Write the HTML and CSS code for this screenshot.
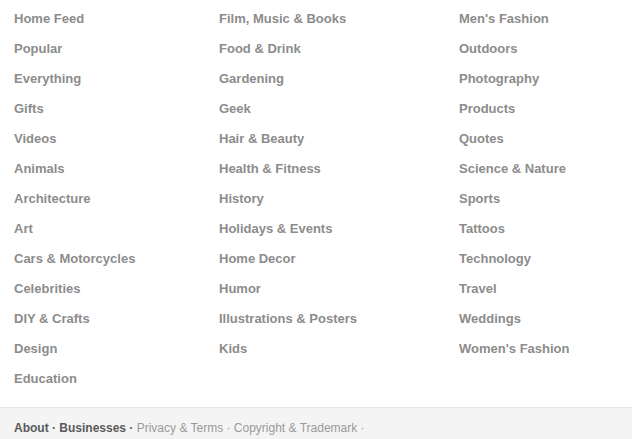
FILE: index.html
```html
<!DOCTYPE html>
<html>
<head>
<meta charset="utf-8">
<link rel="stylesheet" href="styles.css">
</head>
<body>
<div class="cats">
  <ul class="col col1">
    <li>Home Feed</li>
    <li>Popular</li>
    <li>Everything</li>
    <li>Gifts</li>
    <li>Videos</li>
    <li>Animals</li>
    <li>Architecture</li>
    <li>Art</li>
    <li>Cars &amp; Motorcycles</li>
    <li>Celebrities</li>
    <li>DIY &amp; Crafts</li>
    <li>Design</li>
    <li>Education</li>
  </ul>
  <ul class="col col2">
    <li>Film, Music &amp; Books</li>
    <li>Food &amp; Drink</li>
    <li>Gardening</li>
    <li>Geek</li>
    <li>Hair &amp; Beauty</li>
    <li>Health &amp; Fitness</li>
    <li>History</li>
    <li>Holidays &amp; Events</li>
    <li>Home Decor</li>
    <li>Humor</li>
    <li>Illustrations &amp; Posters</li>
    <li>Kids</li>
  </ul>
  <ul class="col col3">
    <li>Men's Fashion</li>
    <li>Outdoors</li>
    <li>Photography</li>
    <li>Products</li>
    <li>Quotes</li>
    <li>Science &amp; Nature</li>
    <li>Sports</li>
    <li>Tattoos</li>
    <li>Technology</li>
    <li>Travel</li>
    <li>Weddings</li>
    <li>Women's Fashion</li>
  </ul>
</div>
<div class="footer">
  <span class="strong">About</span><span class="strong sep"> · </span><span class="strong">Businesses</span><span class="strong sep"> · </span><span class="light">Privacy &amp; Terms</span><span class="light sep"> · </span><span class="light">Copyright &amp; Trademark</span><span class="light sep"> · </span>
</div>
</body>
</html>
```
FILE: styles.css
```css
html, body {
  margin: 0;
  padding: 0;
  background: #fff;
  font-family: "Liberation Sans", Arial, Helvetica, sans-serif;
}
.cats {
  display: grid;
  grid-template-columns: 205px 240px 1fr;
  padding: 4px 14px 13px 14px;
}
.col {
  list-style: none;
  margin: 0;
  padding: 0;
}
.col li {
  font-size: 13px;
  font-weight: bold;
  color: #8c8c8c;
  line-height: 30px;
  height: 30px;
  white-space: nowrap;
}
.col3 li {
  padding-left: 0;
}
.footer {
  border-top: 1px solid #e6e6e6;
  background: #f4f4f4;
  padding: 12px 14px 20px 14px;
  font-size: 12px;
  line-height: 16px;
  white-space: nowrap;
}
.strong {
  font-weight: bold;
  color: #5a5a5a;
}
.light {
  color: #9a9a9a;
}
.sep {
  white-space: pre;
}
```
